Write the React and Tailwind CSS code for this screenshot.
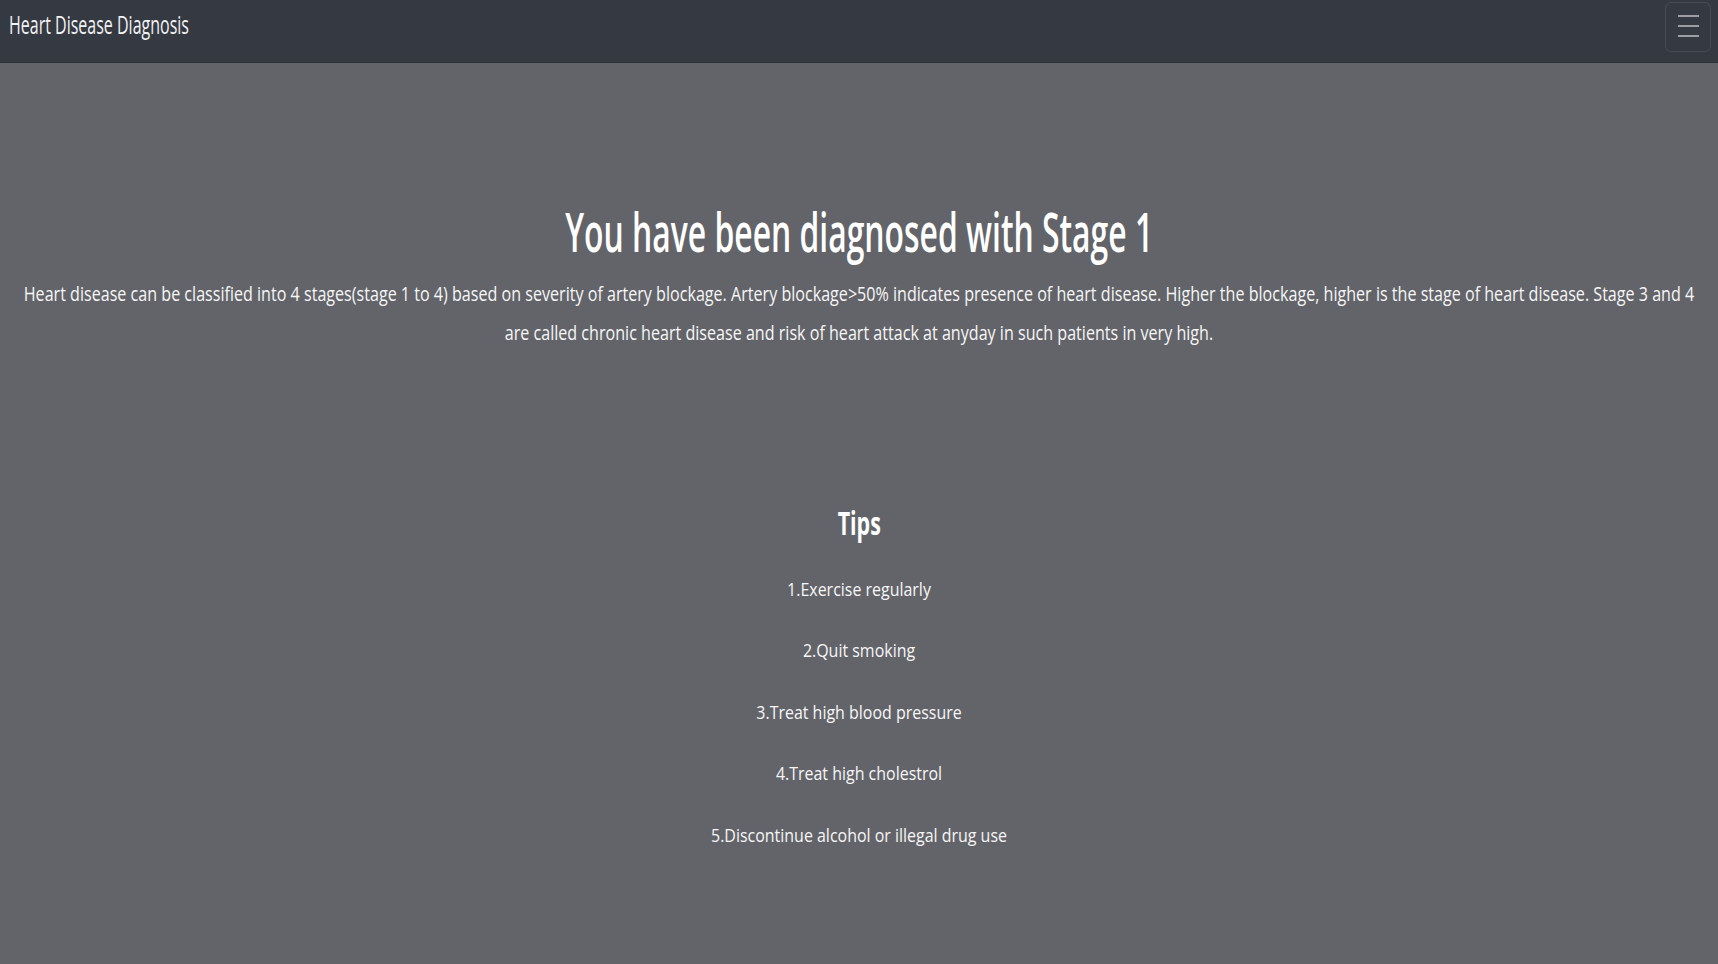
import React from 'react';

const tips = [
    '1.Exercise regularly',
    '2.Quit smoking',
    '3.Treat high blood pressure',
    '4.Treat high cholestrol',
    '5.Discontinue alcohol or illegal drug use',
];

const Navbar = () => {
    return (
        <nav className="h-[63px] bg-[#353941] flex justify-between items-start border-b border-[#2c2f35]">
            <span className="mt-[12px] ml-[9px] inline-block origin-left scale-x-[0.64] text-[25px] leading-none text-[#f1f2f4] font-['Open_Sans',sans-serif] whitespace-nowrap">
                Heart Disease Diagnosis
            </span>
            <button className="mt-[2px] mr-[7px] w-[46px] h-[50px] rounded-md border border-[#474b53] flex flex-col items-center justify-start pt-[12px] gap-[8px]">
                <span className="block w-[21px] h-[2px] bg-[#9c9ea3]"></span>
                <span className="block w-[21px] h-[2px] bg-[#9c9ea3]"></span>
                <span className="block w-[21px] h-[2px] bg-[#9c9ea3]"></span>
            </button>
        </nav>
    );
};

const App = () => {
    return (
        <div className="min-h-screen bg-[#636469] text-[#f6f6f7] font-['Open_Sans',sans-serif]">
            <Navbar />
            <main className="pt-[141px] pb-10 text-center overflow-x-hidden">
                {/* Diagnosis result */}
                <h1 className="inline-block scale-x-[0.59] text-[54px] leading-none font-semibold text-white whitespace-nowrap">
                    You have been diagnosed with Stage 1
                </h1>
                <p className="mt-[16px] w-[calc(100%/0.805)] origin-left scale-x-[0.805] px-[20px] text-[20px] leading-[39px]">
                    Heart disease can be classified into 4 stages(stage 1 to 4) based on severity of artery blockage. Artery blockage&gt;50% indicates presence of heart disease. Higher the blockage, higher is the stage of heart disease. Stage 3 and 4 are called chronic heart disease and risk of heart attack at anyday in such patients in very high.
                </p>

                {/* Tips section */}
                <div className="mt-[155px]">
                    <h2 className="inline-block scale-x-[0.67] text-[32px] leading-none font-bold text-white">
                        Tips
                    </h2>
                    <ul className="mt-[18px] scale-x-[0.84] text-[19px] leading-[61.4px]">
                        {tips.map((tip, key) => (
                            <li key={key}>{tip}</li>
                        ))}
                    </ul>
                </div>
            </main>
        </div>
    );
};

export default App;
